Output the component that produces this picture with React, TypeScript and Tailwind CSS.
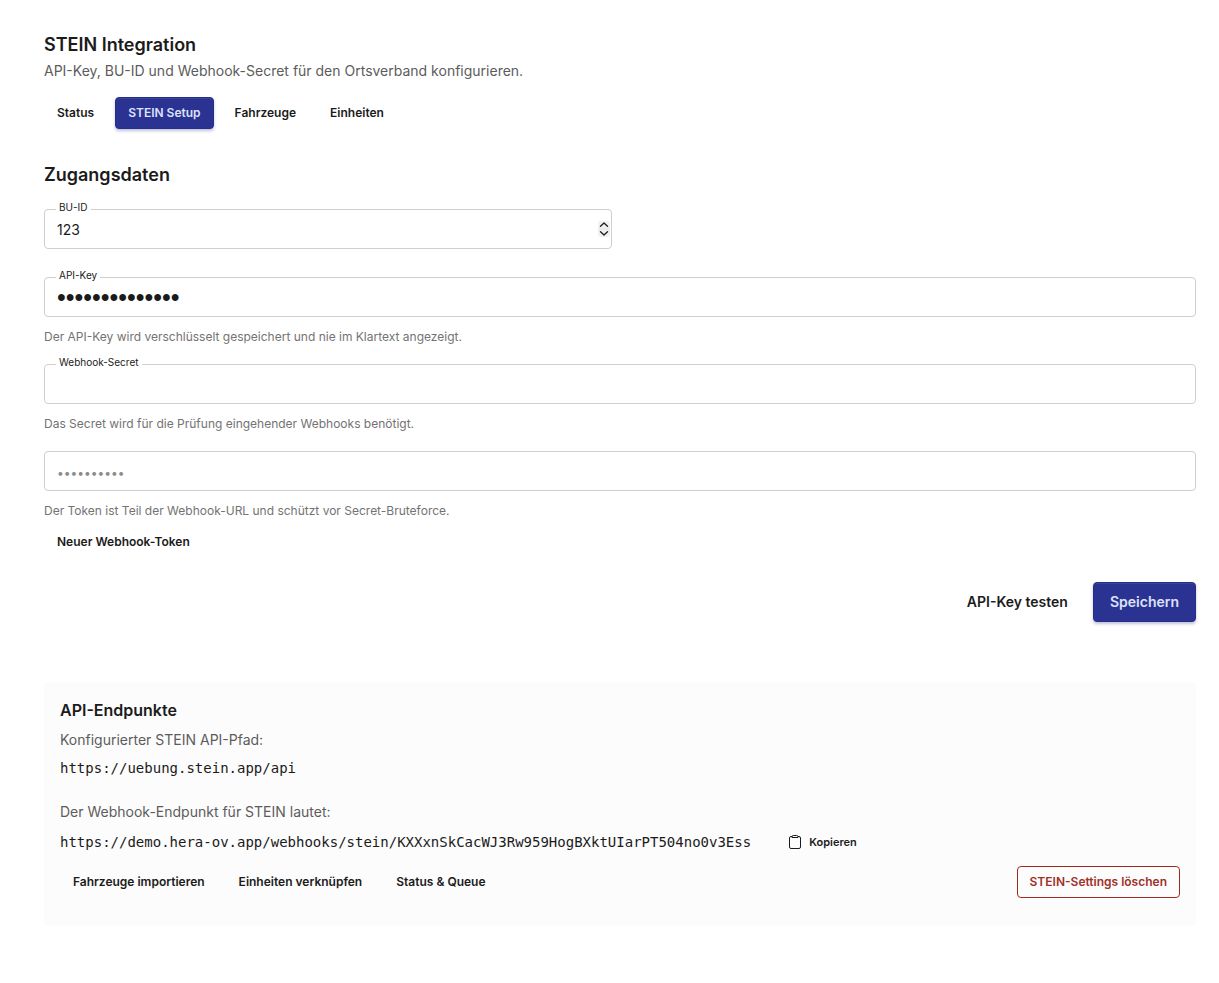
import type { ComponentProps, ReactNode } from 'react';

const ghostSmall =
  'h-8 cursor-pointer rounded border border-transparent px-3 text-xs font-semibold whitespace-nowrap';
const primary =
  'border border-[#262e86] bg-[#2a3392] text-[#dfe1fb] shadow-[inset_0_1px_0_rgba(255,255,255,0.08),0_2px_3px_rgba(42,51,146,0.3)]';

const tabs = ['Status', 'STEIN Setup', 'Fahrzeuge', 'Einheiten'];

type FieldProps = ComponentProps<'input'> & {
  id: string;
  label?: string;
  hint?: string;
  children?: ReactNode;
};

function Field({ id, label, hint, children, type, ...input }: FieldProps) {
  const textStyle =
    type === 'password' ? "font-['Liberation_Sans',sans-serif] text-[25px]" : 'text-sm';
  return (
    <div>
      <div className="relative">
        <input
          id={id}
          type={type}
          {...input}
          className={`block h-10 w-full appearance-none rounded border border-[#cfcfcf] bg-white px-3 outline-none placeholder:text-xs placeholder:text-[#8c8c8c] [&::-webkit-inner-spin-button]:appearance-none ${textStyle}`}
        />
        {label && (
          <label
            htmlFor={id}
            className="absolute -top-2 left-3 bg-white px-[3px] text-[10px] leading-3"
          >
            {label}
          </label>
        )}
        {children}
      </div>
      {hint && <p className="mt-2.5 text-xs leading-5 text-[#737373]">{hint}</p>}
    </div>
  );
}

function Stepper() {
  return (
    <svg
      aria-hidden="true"
      className="absolute top-3 right-0.5 h-4 w-3"
      viewBox="0 0 12 16"
      fill="none"
    >
      <rect width="12" height="16" rx="3" fill="#f1f1f1" />
      <path d="M0 8h12" stroke="#e2e2e2" />
      <path
        d="M2.5 5.2 6 2l3.500 3.200M2.500 10.800 6 14l3.500-3.200"
        stroke="#222"
        strokeWidth="1.400"
        strokeLinecap="round"
        strokeLinejoin="round"
      />
    </svg>
  );
}

function ClipboardIcon() {
  return (
    <svg aria-hidden="true" className="h-4 w-3" viewBox="0 0 12 16" fill="none" stroke="currentColor">
      <rect x="0.500" y="2.500" width="11" height="12" rx="1.500" />
      <path d="M3 3.500v-.7A1.300 1.300 0 0 1 4.300 1.500h3.400A1.300 1.300 0 0 1 9 2.800v.7z" fill="#fcfcfc" />
    </svg>
  );
}

export default function App() {
  return (
    <main className="bg-white pt-[31px] pr-[23px] pb-14 pl-11 font-['Inter',sans-serif] text-[#1b1b1b]">
      <header>
        <h1 className="text-lg leading-7 font-semibold">STEIN Integration</h1>
        <p className="mt-0.5 text-sm leading-5 text-[#5c5c5c]">
          API-Key, BU-ID und Webhook-Secret für den Ortsverband konfigurieren.
        </p>
        <nav className="mt-4 flex flex-wrap gap-2">
          {tabs.map((tab) => (
            <a
              key={tab}
              href="#"
              className={
                tab === 'STEIN Setup'
                  ? `flex h-8 items-center rounded px-3 text-xs font-semibold ${primary}`
                  : 'flex h-8 items-center rounded border border-transparent px-3 text-xs font-semibold'
              }
            >
              {tab}
            </a>
          ))}
        </nav>
      </header>

      <form className="mt-8" onSubmit={(event) => event.preventDefault()}>
        <h2 className="text-lg leading-7 font-semibold">Zugangsdaten</h2>
        <div className="mt-5 grid grid-cols-2 gap-4">
          <Field id="bu-id" label="BU-ID" type="number" defaultValue={123}>
            <Stepper />
          </Field>
        </div>
        <div className="mt-7 flex flex-col gap-[17px]">
          <Field
            id="api-key"
            label="API-Key"
            type="password"
            defaultValue="stein-api-key1"
            hint="Der API-Key wird verschlüsselt gespeichert und nie im Klartext angezeigt."
          />
          <Field
            id="webhook-secret"
            label="Webhook-Secret"
            type="password"
            hint="Das Secret wird für die Prüfung eingehender Webhooks benötigt."
          />
          <Field
            id="webhook-token"
            aria-label="Webhook-Token"
            type="text"
            placeholder="••••••••••"
            hint="Der Token ist Teil der Webhook-URL und schützt vor Secret-Bruteforce."
          />
        </div>
        <button type="button" className={`mt-[5px] ${ghostSmall}`}>
          Neuer Webhook-Token
        </button>
        <div className="mt-6 flex justify-end gap-2">
          <button
            type="button"
            className="h-10 cursor-pointer rounded border border-transparent px-4 text-sm font-semibold"
          >
            API-Key testen
          </button>
          <button
            type="submit"
            className={`h-10 cursor-pointer rounded px-4 text-sm font-semibold ${primary}`}
          >
            Speichern
          </button>
        </div>
      </form>

      <section className="mt-[60px] bg-[#fcfcfc] px-4 pt-4 pb-7">
        <h2 className="text-base leading-6 font-semibold">API-Endpunkte</h2>
        <p className="mt-2 text-sm leading-5 text-[#5c5c5c]">Konfigurierter STEIN API-Pfad:</p>
        <code className="mt-2 block font-['DejaVu_Sans_Mono',monospace] text-sm leading-5">
          https://uebung.stein.app/api
        </code>
        <p className="mt-6 text-sm leading-5 text-[#5c5c5c]">
          Der Webhook-Endpunkt für STEIN lautet:
        </p>
        <div className="mt-2 flex flex-wrap items-center gap-[30px]">
          <code className="font-['DejaVu_Sans_Mono',monospace] text-sm leading-5 break-all">
            https://demo.hera-ov.app/webhooks/stein/KXXxnSkCacWJ3Rw959HogBXktUIarPT504no0v3Ess
          </code>
          <button
            type="button"
            className="flex h-6 cursor-pointer items-center gap-2 px-2 text-[11px] font-semibold"
          >
            <ClipboardIcon />
            Kopieren
          </button>
        </div>
        <div className="mt-3 flex flex-wrap items-center gap-2">
          <button type="button" className={ghostSmall}>
            Fahrzeuge importieren
          </button>
          <button type="button" className={ghostSmall}>
            Einheiten verknüpfen
          </button>
          <button type="button" className={ghostSmall}>
            Status &amp; Queue
          </button>
          <button
            type="button"
            className="ml-auto h-8 cursor-pointer rounded border border-[#a3281f] px-3 text-xs font-semibold text-[#a0302a]"
          >
            STEIN-Settings löschen
          </button>
        </div>
      </section>
    </main>
  );
}
